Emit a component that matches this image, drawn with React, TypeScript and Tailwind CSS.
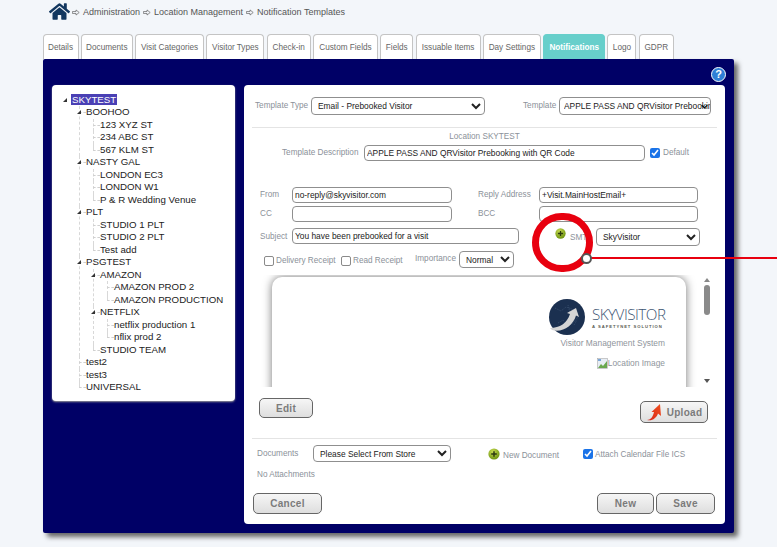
import { FaHome } from "react-icons/fa";

type TreeItem = { label: string; items?: TreeItem[] };

const tabs = [
  { label: "Details", w: "w-[36px]" },
  { label: "Documents", w: "w-[52px]" },
  { label: "Visit Categories", w: "w-[69px]" },
  { label: "Visitor Types", w: "w-[58px]" },
  { label: "Check-in", w: "w-[44px]" },
  { label: "Custom Fields", w: "w-[65px]" },
  { label: "Fields", w: "w-[33px]" },
  { label: "Issuable Items", w: "w-[65px]" },
  { label: "Day Settings", w: "w-[58px]" },
  { label: "Notifications", w: "w-[62px]", active: true },
  { label: "Logo", w: "w-[29px]" },
  { label: "GDPR", w: "w-[35px]" },
];

const tree: TreeItem = {
  label: "SKYTEST",
  items: [
    { label: "BOOHOO", items: [{ label: "123 XYZ ST" }, { label: "234 ABC ST" }, { label: "567 KLM ST" }] },
    { label: "NASTY GAL", items: [{ label: "LONDON EC3" }, { label: "LONDON W1" }, { label: "P & R Wedding Venue" }] },
    { label: "PLT", items: [{ label: "STUDIO 1 PLT" }, { label: "STUDIO 2 PLT" }, { label: "Test add" }] },
    {
      label: "PSGTEST",
      items: [
        { label: "AMAZON", items: [{ label: "AMAZON PROD 2" }, { label: "AMAZON PRODUCTION" }] },
        { label: "NETFLIX", items: [{ label: "netflix production 1" }, { label: "nflix prod 2" }] },
        { label: "STUDIO TEAM" },
      ],
    },
    { label: "test2" },
    { label: "test3" },
    { label: "UNIVERSAL" },
  ],
};

const label = "text-[8.2px] text-[#8b9199] whitespace-nowrap";
const field =
  "h-full rounded-[4px] border border-[#8f8f8f] bg-white px-[2px] text-[8.4px] text-[#222] outline-none";
const button =
  "rounded-[5px] border border-[#666] bg-gradient-to-b from-[#f6f6f6] to-[#dedede] text-[10px] font-bold tracking-[0.3px] text-[#7b7b7b]";
const emptyCheck = "h-[10px] w-[10px] appearance-none rounded-[2px] border border-[#8a8a8a] bg-white";

function Node({ item, root, last }: { item: TreeItem; root?: boolean; last?: boolean }) {
  return (
    <li className="relative pl-[14px]">
      {!root && (
        <>
          <span
            className={`absolute left-[7px] top-0 w-0 border-l border-dashed border-[#d8d8d8] ${last ? "h-[6px]" : "h-full"}`}
          />
          <span className="absolute left-[7px] top-[6px] h-0 w-[7px] border-t border-dashed border-[#d0d0d0]" />
        </>
      )}
      {item.items && (
        <span className="absolute left-[5px] top-[4px] h-0 w-0 border-b-[4px] border-l-[4px] border-b-[#333] border-l-transparent bg-white" />
      )}
      <div className="h-[12.5px] whitespace-nowrap leading-[12.5px]">
        <span className={root ? "-ml-[1px] bg-[#4a40b4] px-[1px] text-white" : ""}>{item.label}</span>
      </div>
      {item.items && (
        <ul>
          {item.items.map((c, i) => (
            <Node key={c.label} item={c} last={i === item.items!.length - 1} />
          ))}
        </ul>
      )}
    </li>
  );
}

function Plus({ className }: { className: string }) {
  return (
    <svg viewBox="0 0 12 12" className={className}>
      <defs>
        <radialGradient id="plusGreen" cx="40%" cy="30%" r="70%">
          <stop offset="0%" stopColor="#c8dc50" />
          <stop offset="100%" stopColor="#6f9412" />
        </radialGradient>
      </defs>
      <circle cx="6" cy="6" r="5.6" fill="url(#plusGreen)" />
      <path d="M6 3.2v5.6M3.2 6h5.6" stroke="#2c3a10" strokeWidth="1.5" />
    </svg>
  );
}

function Crumb() {
  return (
    <svg viewBox="0 0 10 8" className="mx-[3px] h-[7px] w-[8px]" fill="none" stroke="#666" strokeWidth="0.9">
      <path d="M0.5 2.8H5V0.8L9 4 5 7.2V5.2H0.5z" />
    </svg>
  );
}

function Logo() {
  return (
    <div className="flex items-center gap-[7px]">
      <svg viewBox="0 0 36 36" className="h-[36px] w-[36px]">
        <circle cx="18" cy="18" r="18" fill="#1b3050" />
        <path d="M6 9l6 3 5-4 6 2 5 5M9 24l5-3 3 5 7-2 5-6M19 6l2 8M25 26l3-5" stroke="#4f6685" strokeWidth="0.5" fill="none" strokeDasharray="1 1" />
        <path d="M1 29C11 29 18 24 21 15l-3-1 9-5 3 9-3-1.500C24 27 13 34 3 31z" fill="#d5d5d5" />
      </svg>
      <div className="flex w-[73px] flex-col items-start">
        <span className="h-[17px] text-[15.200px] font-light leading-[17px] tracking-[-0.5px] text-[#3c5472] font-['Open_Sans',sans-serif]">
          SKYVISITOR
        </span>
        <span className="mt-[1px] h-[5px] text-[4.200px] font-bold leading-[5px] tracking-[0.95px] whitespace-nowrap text-[#5a5a52]">
          A SAFETYNET SOLUTION
        </span>
      </div>
    </div>
  );
}

export default function App() {
  return (
    <div className="h-[547px] w-[777px] overflow-hidden relative bg-[#f3f6fa] font-['Liberation_Sans',Arial,sans-serif]">
      {/* Breadcrumb */}
      <div className="flex h-[22px] items-center pl-[49px] text-[9px] text-[#555]">
        <FaHome className="mr-[-1px] h-[21px] w-[21px] text-[#12375f]" />
        <div className="flex items-center pt-[3px]">
          <Crumb />
          <span>Administration</span>
          <Crumb />
          <span>Location Management</span>
          <Crumb />
          <span>Notification Templates</span>
        </div>
      </div>

      {/* Tabs */}
      <div className="mt-[12px] flex h-[25px] gap-[2.3px] pl-[42.500px]">
        {tabs.map((t) => (
          <div
            key={t.label}
            className={`${t.w} flex items-center justify-center whitespace-nowrap rounded-t-[4px] border border-b-0 pt-[3px] text-[8.2px] ${
              t.active ? "border-[#67cfcb] bg-[#67cfcb] font-bold text-white" : "border-[#c4c4c4] bg-white text-[#666]"
            }`}
          >
            {t.label}
          </div>
        ))}
      </div>

      {/* Navy panel */}
      <div className="ml-[43px] h-[474px] w-[691px] rounded-[2px] bg-[#000066] px-[9px] shadow-[4px_4px_5px_#666]">
        <div className="flex h-[26px] items-start justify-end pt-[8px]">
          <div className="-mr-[1px] flex h-[15px] w-[15px] items-center justify-center rounded-full border-[1.5px] border-white bg-[#2f7fd6] text-[11px] font-bold text-white">
            ?
          </div>
        </div>
        <div className="flex gap-[9px]">
          {/* Tree */}
          <div className="h-[316px] w-[183px] rounded-[4px] bg-white pl-[6px] pt-[8.5px] text-[9.700px] text-[#222] shadow-[0_1px_2px_#999]">
            <ul>
              <Node item={tree} root />
            </ul>
          </div>

          {/* Form */}
          <div className="h-[439px] w-[481px] rounded-[4px] bg-white pt-[12px]">
            <div className="flex h-[18px] items-center pl-[11px]">
              <span className={`${label} w-[56px]`}>Template Type</span>
              <select className={`${field} w-[174px]`} defaultValue="a">
                <option value="a">Email - Prebooked Visitor</option>
              </select>
              <span className={`${label} ml-[38px] w-[36px]`}>Template</span>
              <div className="relative h-full w-[152px]">
                <select className={`${field} block w-full appearance-none pl-[4px] pr-0`} defaultValue="a">
                  <option value="a">APPLE PASS AND QRVisitor Prebooking with QR Code</option>
                </select>
                <svg viewBox="0 0 10 6" className="pointer-events-none absolute right-[3px] top-[7px] h-[5px] w-[7px]" fill="none" stroke="#111" strokeWidth="1.8">
                  <path d="M1 1l4 4 4-4" />
                </svg>
              </div>
            </div>

            <div className="mx-[8px] mt-[12px] h-px bg-[#e4e4e4]" />
            <div className={`${label} mt-[3px] h-[11px] text-center leading-[11px]`}>Location SKYTEST</div>

            <div className="mt-[3px] flex h-[16px] items-center pl-[38px]">
              <span className={`${label} mt-[1px] w-[82px]`}>Template Description</span>
              <input className={`${field} w-[281px]`} defaultValue="APPLE PASS AND QRVisitor Prebooking with QR Code" />
              <input type="checkbox" defaultChecked className="ml-[5px] h-[10px] w-[10px] accent-[#1a73e8]" />
              <span className={`${label} ml-[3px] mt-[1px]`}>Default</span>
            </div>

            <div className="mt-[26px] flex h-[16px] items-center pl-[16px]">
              <span className={`${label} mt-[1px] w-[32px]`}>From</span>
              <input className={`${field} w-[160px]`} defaultValue="no-reply@skyvisitor.com" />
              <span className={`${label} ml-[26px] mt-[1px] w-[61px]`}>Reply Address</span>
              <input className={`${field} w-[159px]`} defaultValue="+Visit.MainHostEmail+" />
            </div>
            <div className="mt-[3px] flex h-[16px] items-center pl-[16px]">
              <span className={`${label} mt-[1px] w-[32px]`}>CC</span>
              <input className={`${field} w-[160px]`} />
              <span className={`${label} ml-[26px] mt-[1px] w-[61px]`}>BCC</span>
              <input className={`${field} w-[159px]`} />
            </div>

            <div className="mt-[6px] flex h-[18px] items-start pl-[16px]">
              <span className={`${label} mt-[3px] w-[32px]`}>Subject</span>
              <input className={`${field} !h-[16px] w-[227px]`} defaultValue="You have been prebooked for a visit" />
              <Plus className="ml-[36px] h-[11px] w-[11px]" />
              <span className={`${label} ml-[4px] mt-[4px] w-[26px]`}>SMT</span>
              <select className={`${field} w-[104px]`} defaultValue="a">
                <option value="a">SkyVisitor</option>
              </select>
            </div>

            <div className="mt-[5px] flex h-[17px] items-center pl-[20px]">
              <input type="checkbox" className={`${emptyCheck} mt-[2px]`} />
              <span className={`${label} ml-[2px] mt-[3px] w-[65px]`}>Delivery Receipt</span>
              <input type="checkbox" className={`${emptyCheck} mt-[2px]`} />
              <span className={`${label} ml-[2px] mt-[3px] w-[62px]`}>Read Receipt</span>
              <span className={`${label} w-[44px]`}>Importance</span>
              <select className={`${field} w-[55px]`} defaultValue="a">
                <option value="a">Normal</option>
              </select>
            </div>

            {/* Template preview */}
            <div className="ml-[8px] mt-[7px] flex h-[112px] w-[460px] overflow-hidden">
              <div className="ml-[20px] mr-[15px] mt-[2px] h-[130px] w-[414px] shrink-0 rounded-t-[10px] bg-white pr-[21px] pt-[22px] shadow-[0_0_10px_#777]">
                <div className="flex flex-col items-end">
                  <Logo />
                  <div className="mt-[3px] h-[11px] text-[8.4px] leading-[11px] text-[#8f959c]">Visitor Management System</div>
                  <div className="mt-[9px] flex h-[11px] items-center text-[8.4px] text-[#8f959c]">
                    <svg viewBox="0 0 11 11" className="h-[11px] w-[11px]">
                      <rect x="0.5" y="0.5" width="10" height="10" fill="#e8eef5" stroke="#aaa" strokeWidth="0.6" />
                      <path d="M1 10l3-4 2 2 4-5v7z" fill="#6aa84f" />
                      <path d="M1 1h3v2H1z" fill="#7ba7d9" />
                    </svg>
                    Location Image
                  </div>
                </div>
              </div>
              <div className="flex h-[110px] w-[11px] flex-col items-center">
                <span className="mt-[3px] h-0 w-0 border-x-[3px] border-b-[4px] border-x-transparent border-b-[#888]" />
                <span className="mt-[3px] h-[30px] w-[6px] rounded-[3px] bg-[#8a8a8a]" />
                <span className="mb-[2px] mt-auto h-0 w-0 border-x-[3px] border-t-[4px] border-x-transparent border-t-[#555]" />
              </div>
            </div>

            <div className="mt-[11px] flex h-[25px] items-start pl-[15px]">
              <button className={`${button} h-[20px] w-[54px]`}>Edit</button>
              <button className={`${button} ml-[327px] mt-[3px] flex h-[22px] w-[68px] items-center justify-center gap-[5px]`}>
                <svg viewBox="0 0 16 18" className="h-[18px] w-[16px]">
                  <defs>
                    <linearGradient id="uploadRed" x1="0" y1="1" x2="1" y2="0">
                      <stop offset="0%" stopColor="#d8261a" />
                      <stop offset="100%" stopColor="#f0501e" />
                    </linearGradient>
                  </defs>
                  <path d="M1 17C4.500 17 7 14 8 9L5.500 9 14 1l1 12-3-2.500C10.500 15 6 18.500 1 17z" fill="url(#uploadRed)" />
                </svg>
                Upload
              </button>
            </div>

            <div className="mx-[8px] mt-[15px] h-px bg-[#e4e4e4]" />

            <div className="mt-[6px] flex h-[17px] items-center pl-[13px]">
              <span className={`${label} mt-[1px] w-[56px]`}>Documents</span>
              <select className={`${field} w-[138px]`} defaultValue="a">
                <option value="a">Please Select From Store</option>
              </select>
              <Plus className="ml-[37px] mt-[1px] h-[12px] w-[12px]" />
              <span className={`${label} ml-[3px] mt-[6px] w-[80px]`}>New Document</span>
              <input type="checkbox" defaultChecked className="mt-[1px] h-[10px] w-[10px] accent-[#1a73e8]" />
              <span className={`${label} ml-[2px] mt-[4px]`}>Attach Calendar File ICS</span>
            </div>
            <div className={`${label} ml-[13px] mt-[7px] h-[11px] leading-[11px]`}>No Attachments</div>

            <div className="mt-[13px] flex h-[21px] pl-[9px]">
              <button className={`${button} w-[69px]`}>Cancel</button>
              <button className={`${button} ml-auto w-[57px]`}>New</button>
              <button className={`${button} ml-[2px] mr-[10px] w-[59px]`}>Save</button>
            </div>
          </div>
        </div>
      </div>

      {/* Annotation callout */}
      <div className="absolute left-[532px] top-[213px] h-[59px] w-[61px] rounded-full border-[7px] border-[#e8000f]" />
      <div className="absolute left-[591px] top-[257px] h-[2px] w-[186px] bg-[#e8000f]" />
      <div className="absolute left-[581px] top-[253px] h-[11px] w-[11px] rounded-full border-2 border-[#555] bg-white" />
    </div>
  );
}
